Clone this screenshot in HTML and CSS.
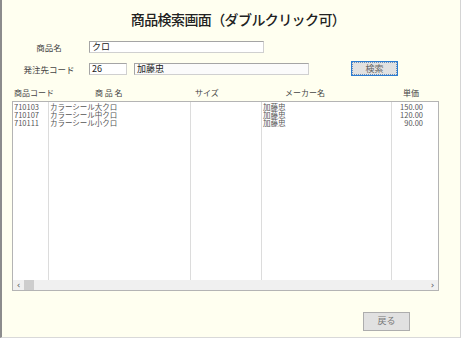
FILE: index.html
```html
<!DOCTYPE html>
<html lang="ja">
<head>
<meta charset="utf-8">
<link rel="stylesheet" href="styles.css">
</head>
<body>
<div class="window">
  <h1 class="title">商品検索画面（ダブルクリック可）</h1>
  <div class="row row1">
    <span class="label">商品名</span>
    <div class="input wide">クロ</div>
  </div>
  <div class="row row2">
    <span class="label">発注先コード</span>
    <div class="input short">26</div>
    <div class="input wide ro">加藤忠</div>
    <button class="btn search">検索</button>
  </div>
  <div class="head">
    <span>商品コード</span>
    <span>商 品 名</span>
    <span>サイズ</span>
    <span>メーカー名</span>
    <span>単価</span>
  </div>
  <div class="list">
    <div class="cols">
      <div class="col c1"><div>710103</div><div>710107</div><div>710111</div></div>
      <div class="col c2"><div>カラーシール大クロ</div><div>カラーシール中クロ</div><div>カラーシール小クロ</div></div>
      <div class="col c3"></div>
      <div class="col c4"><div>加藤忠</div><div>加藤忠</div><div>加藤忠</div></div>
      <div class="col c5"><div>150.00</div><div>120.00</div><div>90.00</div></div>
    </div>
    <div class="hscroll">
      <span class="arrow">&lsaquo;</span>
      <span class="thumb"></span>
      <span class="track"></span>
      <span class="arrow">&rsaquo;</span>
    </div>
  </div>
  <div class="footer">
    <button class="btn back">戻る</button>
  </div>
</div>
</body>
</html>
```
FILE: styles.css
```css
* { box-sizing: border-box; }
html, body { margin: 0; padding: 0; background: #fff; }
body { font-family: "Noto Sans CJK JP", "Noto Sans", sans-serif; color: #333; }

.window {
  width: 461px;
  height: 338px;
  background: #fffff0;
  border-left: 2px solid #8c8c8c;
  border-right: 1px solid #d4d4d4;
  border-bottom: 1px solid #d9d9d9;
  overflow: hidden;
}

.title {
  margin: 10px 0 0 0;
  padding-left: 14px;
  height: 18px;
  line-height: 18px;
  font-size: 14px;
  font-weight: 500;
  text-align: center;
  color: #222;
  letter-spacing: -0.6px;
}

.row { display: flex; align-items: center; padding-left: 10px; }
.row1 { margin-top: 13px; height: 12px; }
.row2 { margin-top: 8px; height: 15px; }

.label {
  width: 74px;
  margin-right: 3px;
  text-align: center;
  font-size: 8.5px;
  line-height: 12px;
  color: #444;
}

.input {
  height: 12px;
  background: #fff;
  border: 1px solid #a5a5a5;
  border-right-color: #d0d0d0;
  border-bottom-color: #d0d0d0;
  font-size: 9px;
  line-height: 10px;
  padding-left: 2px;
  color: #222;
}
.input.wide { width: 175px; }
.input.short { width: 38px; margin-right: 7px; }
.input.ro { background: #fbfbfb; }

.btn {
  font-family: "Noto Sans CJK JP", sans-serif;
  font-size: 9px;
  color: #666;
  background: #e1e1e1;
  border: 1px solid #adadad;
  padding: 0;
  line-height: 12px;
}
.search {
  width: 47px;
  height: 15px;
  margin-left: 42px;
  border-color: #2b7cd3;
  outline: 1px dotted #6a8fb8;
  outline-offset: -2px;
}

.head {
  display: grid;
  grid-template-columns: 81px 100px 90px 118px auto;
  padding-left: 12px;
  margin-top: 10px;
  height: 13px;
  font-size: 8px;
  line-height: 13px;
  color: #444;
}

.list {
  margin: 2px 0 0 10px;
  width: 427px;
  height: 190px;
  background: #fff;
  border: 1px solid #b4b4b4;
  display: flex;
  flex-direction: column;
}

.cols { flex: 1; display: flex; }
.col {
  border-right: 1px solid #dcdcdc;
  font-size: 7.5px;
  line-height: 8px;
  padding: 1px 0 0 1px;
  color: #555;
  white-space: nowrap;
}
.c1 { width: 36px; }
.c2 { width: 142px; }
.c3 { width: 71px; }
.c4 { width: 130px; }
.c5 { width: 34px; text-align: right; padding-right: 3px; border-right: none; }

.hscroll {
  height: 10px;
  background: #f0f0f0;
  display: flex;
  align-items: center;
}
.arrow {
  width: 11px;
  font-size: 9px;
  line-height: 10px;
  text-align: center;
  color: #555;
  font-family: "DejaVu Sans", sans-serif;
}
.thumb { width: 10px; height: 10px; background: #cdcdcd; }
.track { flex: 1; }

.footer { margin-top: 14px; padding-left: 361px; }
.back {
  width: 47px;
  height: 19px;
  color: #777;
}
```
